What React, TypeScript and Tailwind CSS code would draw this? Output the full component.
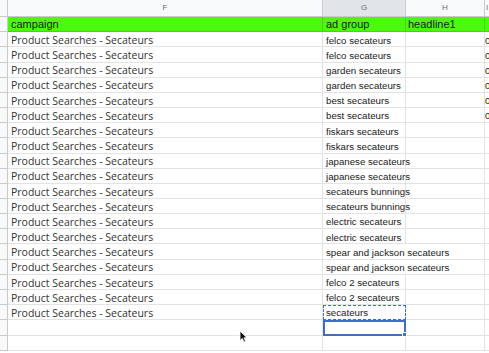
import React from 'react'

const groups = [
  'felco secateurs',
  'felco secateurs',
  'garden secateurs',
  'garden secateurs',
  'best secateurs',
  'best secateurs',
  'fiskars secateurs',
  'fiskars secateurs',
  'japanese secateurs',
  'japanese secateurs',
  'secateurs bunnings',
  'secateurs bunnings',
  'electric secateurs',
  'electric secateurs',
  'spear and jackson secateurs',
  'spear and jackson secateurs',
  'felco 2 secateurs',
  'felco 2 secateurs',
  'secateurs',
]

const line = 'border-[#e2e3e3]'

export default function App() {
  return (
    <div className="relative w-[489px] h-[353px] overflow-hidden bg-white font-['Liberation_Sans',sans-serif]">
      {/* column letters */}
      <div className="flex h-[17px] bg-[#f8f9fa] text-[8px] text-[#6b6f73]">
        <div className="w-[8px] shrink-0 border-r border-b border-[#c8cacc]" />
        <div className="w-[315px] shrink-0 border-r border-b border-[#c8cacc] flex items-center justify-center">F</div>
        <div className="w-[83px] shrink-0 border-r border-b border-[#c8cacc] bg-[#e1e4e8] flex items-center justify-center">G</div>
        <div className="w-[79px] shrink-0 border-r border-b border-[#c8cacc] flex items-center justify-center">H</div>
        <div className="flex-1 border-b border-[#c8cacc] flex items-center pl-[1px]">I</div>
      </div>

      {/* header row */}
      <div className="flex h-[15.3px] text-[11px] text-[#1a1a1a]">
        <div className="w-[8px] shrink-0 border-r border-b border-[#c8cacc] bg-[#f8f9fa]" />
        <div className="w-[315px] shrink-0 bg-[#4cf80e] border-r border-b border-[#3fd90a] pl-[3px] pt-[1px] flex items-center">campaign</div>
        <div className="w-[83px] shrink-0 bg-[#4cf80e] border-r border-b border-[#3fd90a] pl-[3px] pt-[1px] flex items-center">ad group</div>
        <div className="w-[79px] shrink-0 bg-[#4cf80e] border-r border-b border-[#3fd90a] pl-[2px] pt-[1px] flex items-center">headline1</div>
        <div className="flex-1 bg-[#4cf80e] border-b border-[#3fd90a]" />
      </div>

      {/* data rows */}
      {groups.map((g, i) => {
        const spills = g.length > 20
        const last = i === groups.length - 1
        return (
          <div key={i} className="flex h-[15.17px]">
            <div className="w-[8px] shrink-0 border-r border-b border-[#c8cacc] bg-[#f8f9fa]" />
            <div className={`w-[315px] shrink-0 border-r border-b ${line} pl-[3px] pt-[3px] flex items-center whitespace-nowrap text-[#333] text-[10.5px] font-['Open_Sans',sans-serif]`}>
              Product Searches - Secateurs
            </div>
            <div
              className={`relative w-[83px] shrink-0 border-b ${line} ${spills ? '' : 'border-r'} pl-[3px] pt-[3px] flex items-center whitespace-nowrap text-[9.7px] text-[#1a1a1a] ${
                last ? 'outline-1 outline-dashed outline-[#3f6fc4] -outline-offset-1' : ''
              }`}
            >
              <span className="relative z-10">{g}</span>
            </div>
            <div className={`w-[79px] shrink-0 border-r border-b ${line}`} />
            <div className={`flex-1 border-b ${line} flex items-center pt-[3px] text-[9.7px] text-[#1a1a1a]`}>{i < 6 ? '0' : ''}</div>
          </div>
        )
      })}

      {/* selected empty row */}
      <div className="flex h-[15.5px]">
        <div className="w-[8px] shrink-0 border-r border-b border-[#c8cacc] bg-[#f8f9fa]" />
        <div className={`w-[315px] shrink-0 border-r border-b ${line}`} />
        <div className="relative w-[83px] shrink-0 border-2 border-[#3f6fc4]">
          <div className="absolute -right-[3px] -bottom-[3px] w-[5px] h-[5px] bg-[#3f6fc4] border border-white" />
        </div>
        <div className={`w-[79px] shrink-0 border-r border-b ${line}`} />
        <div className={`flex-1 border-b ${line}`} />
      </div>

      {/* trailing row */}
      <div className="flex h-[15.6px]">
        <div className="w-[8px] shrink-0 border-r border-b border-[#c8cacc] bg-[#f8f9fa]" />
        <div className={`w-[315px] shrink-0 border-r border-b ${line}`} />
        <div className={`w-[83px] shrink-0 border-r border-b ${line}`} />
        <div className={`w-[79px] shrink-0 border-r border-b ${line}`} />
        <div className={`flex-1 border-b ${line}`} />
      </div>

      {/* mouse cursor */}
      <svg className="absolute left-[239px] top-[330px]" width="9" height="13" viewBox="0 0 9 13">
        <path d="M1 1 L1 10.5 L3.3 8.4 L5 12 L6.6 11.3 L5 7.8 L8 7.8 Z" fill="#111" stroke="#fff" strokeWidth="0.8" />
      </svg>
    </div>
  )
}
